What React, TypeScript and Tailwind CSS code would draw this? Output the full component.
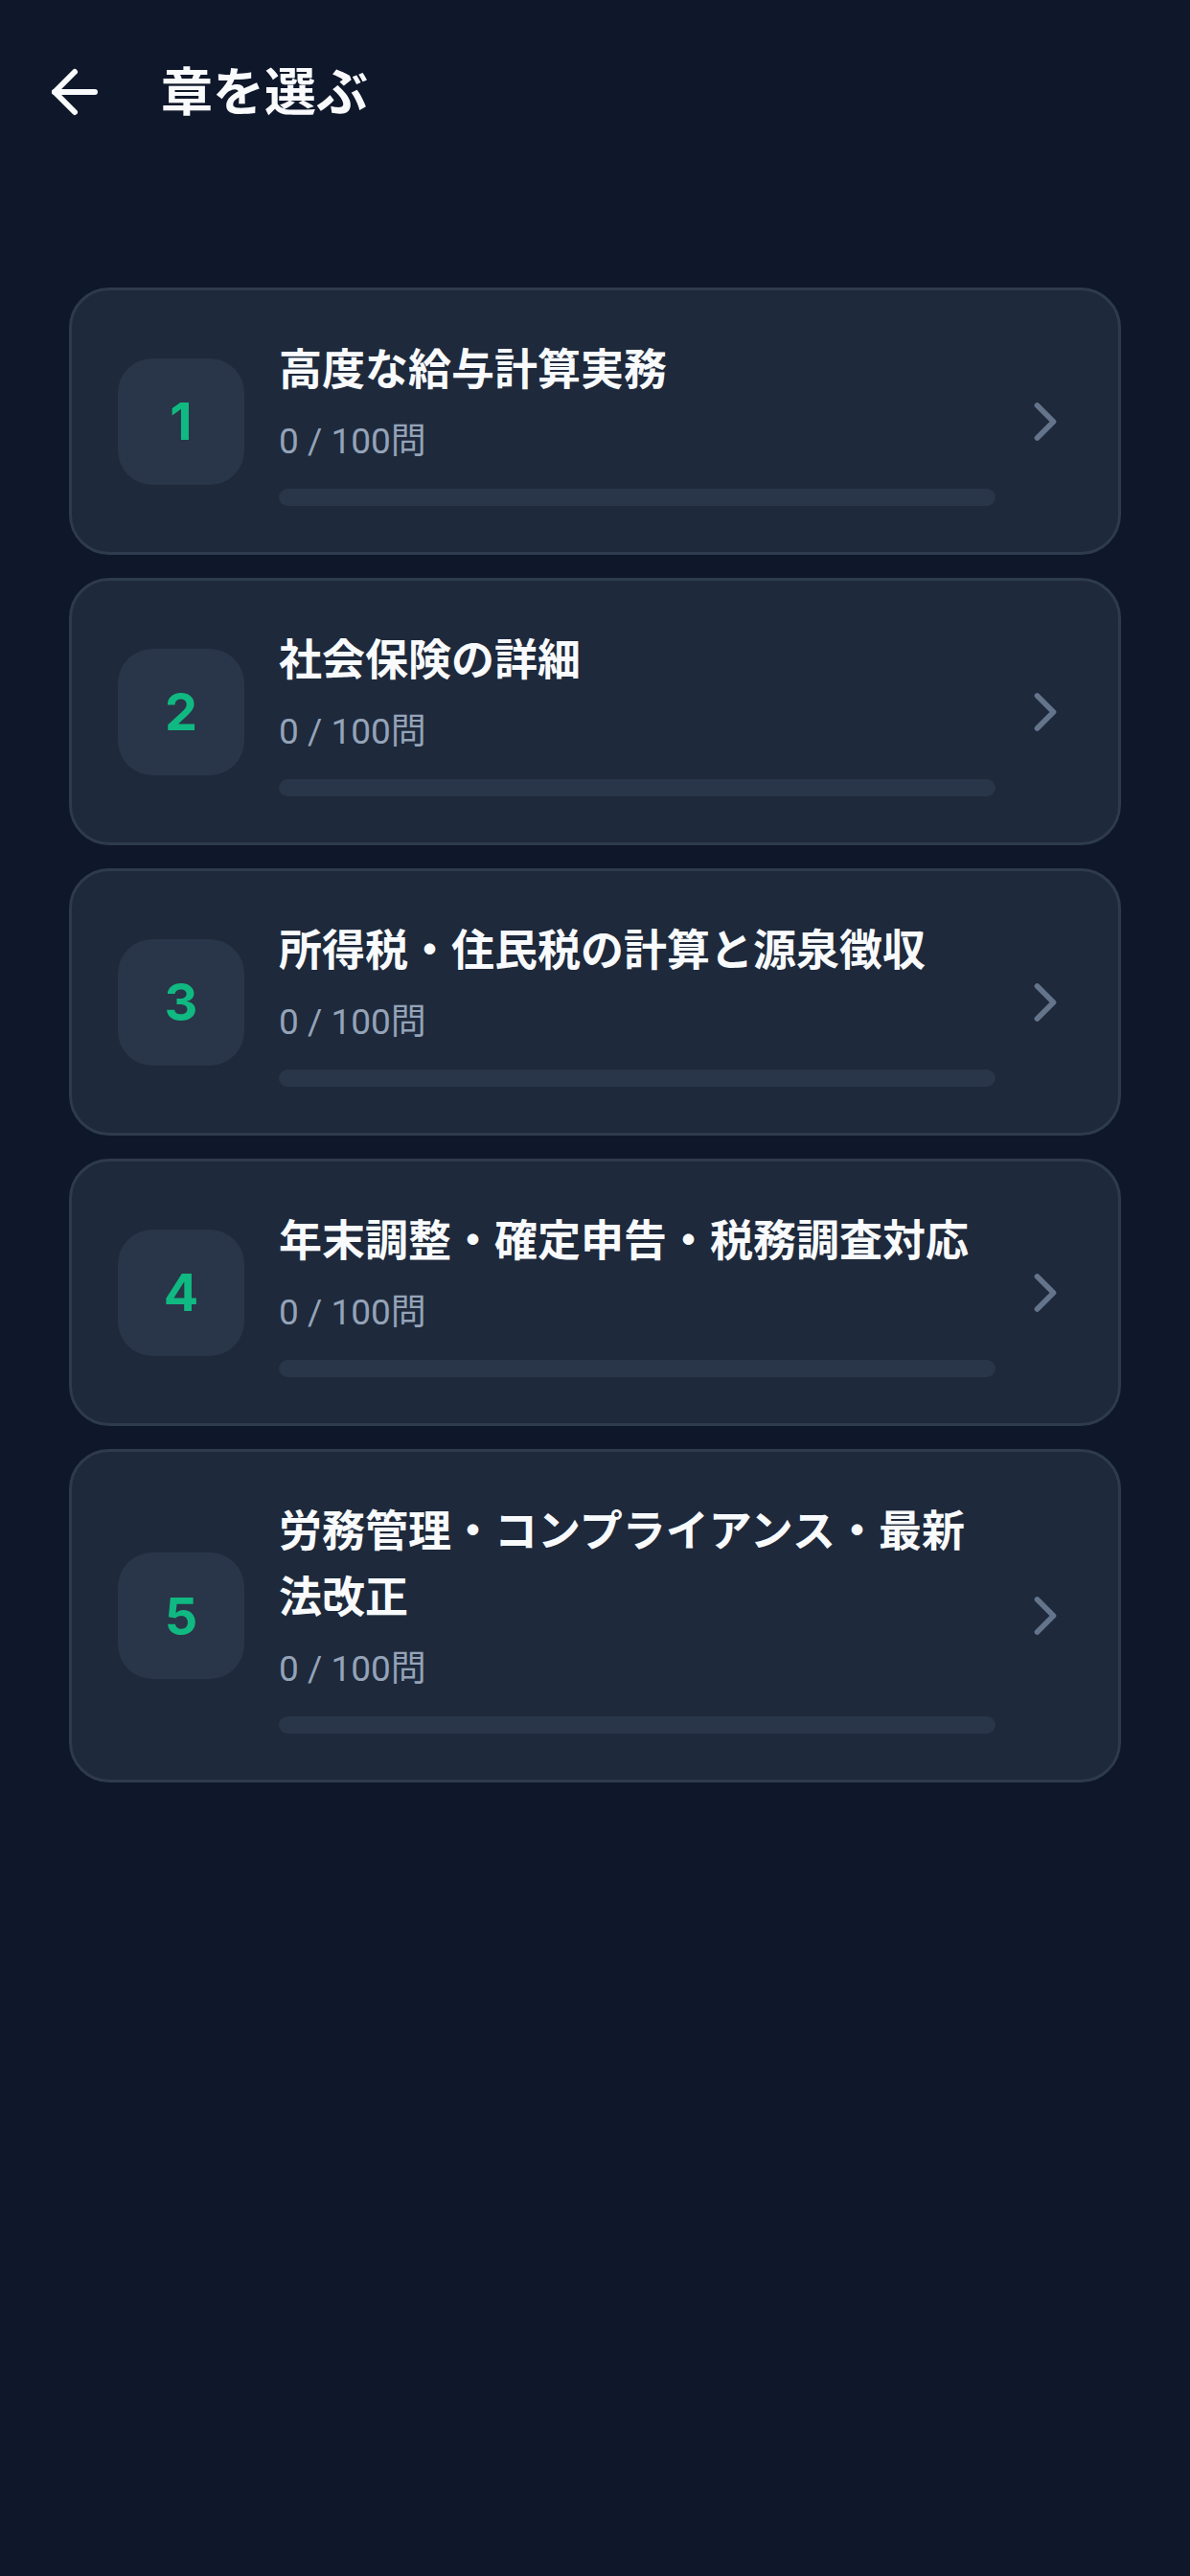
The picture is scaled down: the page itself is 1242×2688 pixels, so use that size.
import { ArrowLeft, ChevronRight } from 'lucide-react'

const chapters = [
  { no: 1, title: '高度な給与計算実務', done: 0, total: 100 },
  { no: 2, title: '社会保険の詳細', done: 0, total: 100 },
  { no: 3, title: '所得税・住民税の計算と源泉徴収', done: 0, total: 100 },
  { no: 4, title: '年末調整・確定申告・税務調査対応', done: 0, total: 100 },
  { no: 5, title: '労務管理・コンプライアンス・最新法改正', done: 0, total: 100 },
]

const font = "font-['Inter','Noto_Sans_CJK_JP',sans-serif]"

function ChapterCard({ no, title, done, total }: { no: number; title: string; done: number; total: number }) {
  return (
    <button className="w-full text-left flex items-center rounded-[42px] border-[3px] border-[#2e3a4d] bg-[#1e293b] p-[48px]">
      <div className="w-[132px] h-[132px] shrink-0 rounded-[36px] bg-[#293548] flex items-center justify-center">
        <span className="text-[54px] font-bold text-[#10b981]">{no}</span>
      </div>
      <div className="flex-1 min-w-0 ml-[36px]">
        <div className="text-[45px] leading-[69px] font-bold text-[#f8fafc]">{title}</div>
        <div className="mt-[12px] text-[37px] leading-[58px] text-[#94a3b8] font-['Roboto','Noto_Sans_CJK_JP',sans-serif]">
          {done} / {total}問
        </div>
        <div className="mt-[20px] h-[18px] rounded-full bg-[#293548] overflow-hidden">
          <div className="h-full bg-[#10b981] rounded-full" style={{ width: `${(done / total) * 100}%` }} />
        </div>
      </div>
      <ChevronRight className="shrink-0 ml-[18px] -mr-[6px] text-[#64748b]" size={68} strokeWidth={2} />
    </button>
  )
}

export default function App() {
  return (
    <div className={`min-h-screen bg-[#0f172a] ${font}`}>
      <header className="h-[192px] flex items-center px-[42px]">
        <ArrowLeft className="text-[#f8fafc]" size={72} strokeWidth={2} />
        <h1 className="ml-[54px] text-[54px] font-bold text-[#f8fafc]">章を選ぶ</h1>
      </header>

      <main className="px-[72px] pt-[108px] flex flex-col gap-[24px]">
        {chapters.map((c) => (
          <ChapterCard key={c.no} {...c} />
        ))}
      </main>
    </div>
  )
}
